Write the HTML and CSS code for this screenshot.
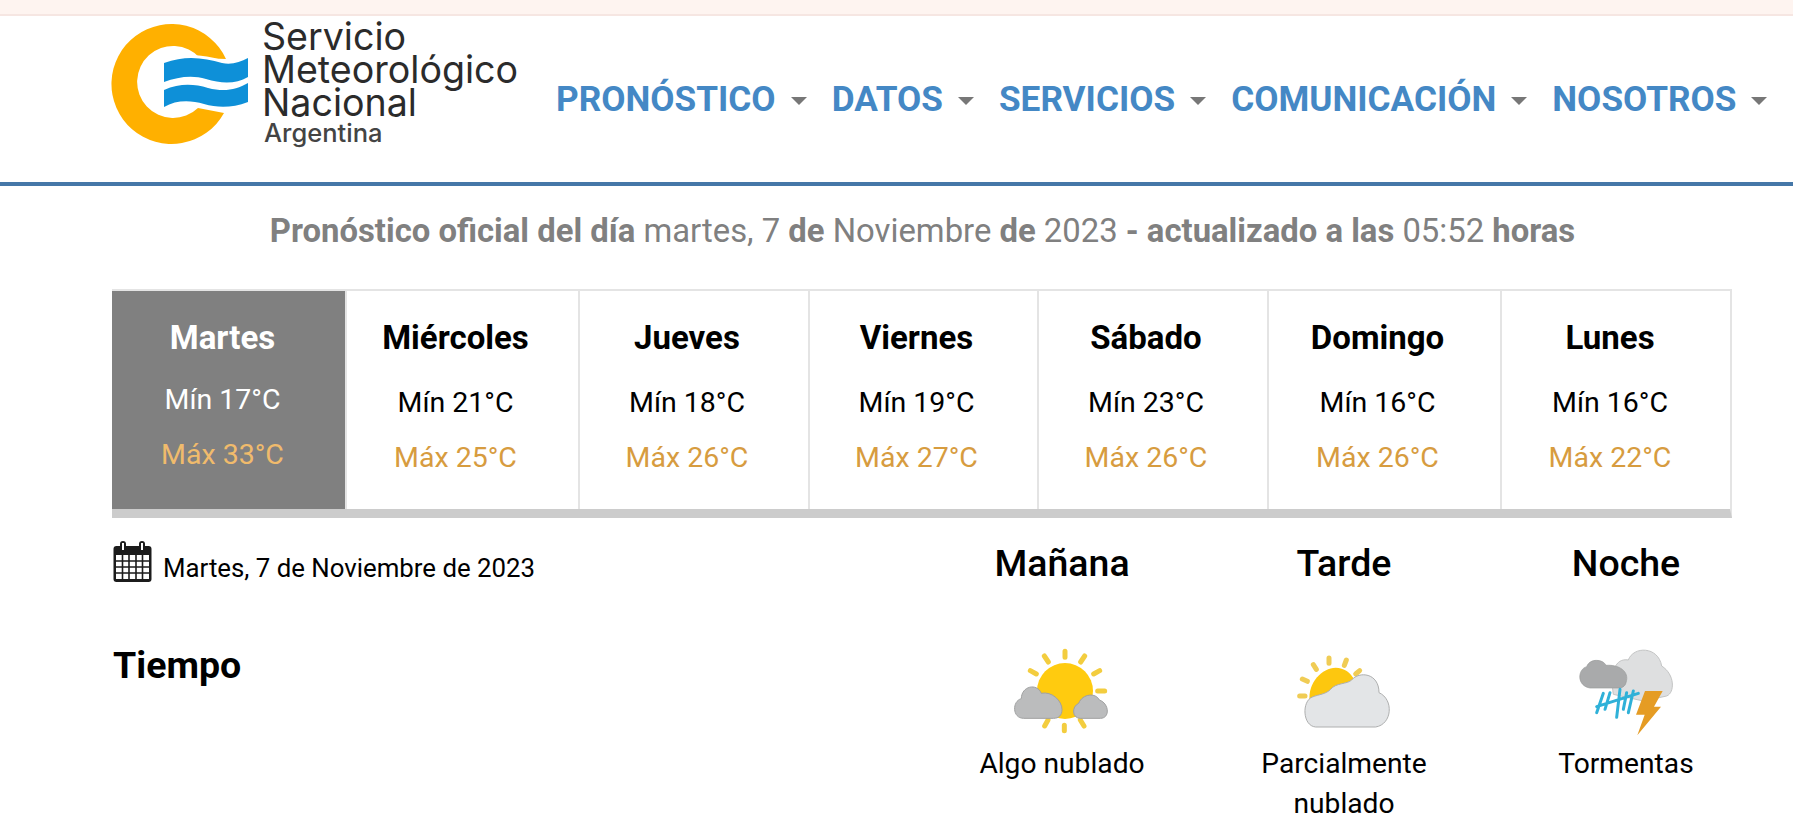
FILE: index.html
```html
<!doctype html>
<html lang="es">
<head>
    <meta charset="UTF-8">
    <meta name="viewport" content="width=device-width, initial-scale=1.0">
    <title>Servicio Meteorológico Nacional</title>
    <link rel="stylesheet" href="styles.css">
</head>
<body>

<div class="top-strip"></div>

<header class="header">
    <a class="logo">
        <svg class="logo-mark" viewBox="110 20 140 130" width="140" height="130">
            <path fill="#ffb000" d="M226 59A60 60 0 1 0 224 113L198 108A36 36 0 1 1 200 58Z"/>
            <path fill="#fff" d="M160 60C186 52 204 55 222 60C232 62 240 59 252 55V106C232 112 218 112 204 108C190 104 176 104 160 111Z"/>
            <path fill="#0e90d8" d="M164 63C186 55 204 58 222 63C232 65 240 62 248 58V77C236 84 222 84 206 79C192 75 178 77 164 82Z"/>
            <path fill="#0e90d8" d="M164 90C180 83 194 84 208 88C224 92 236 90 248 83V102C232 108 218 108 204 104C190 100 176 100 164 107Z"/>
        </svg>
        <div class="logo-text">
            <div class="logo-name">Servicio</div>
            <div class="logo-name">Meteorológico</div>
            <div class="logo-name">Nacional</div>
            <div class="logo-country">Argentina</div>
        </div>
    </a>
    <nav class="nav">
        <a class="nav-item">PRONÓSTICO<span class="caret"></span></a>
        <a class="nav-item">DATOS<span class="caret"></span></a>
        <a class="nav-item">SERVICIOS<span class="caret"></span></a>
        <a class="nav-item">COMUNICACIÓN<span class="caret"></span></a>
        <a class="nav-item">NOSOTROS<span class="caret"></span></a>
    </nav>
</header>

<h1 class="issued"><b>Pronóstico oficial del día</b> martes, 7 <b>de</b> Noviembre <b>de</b> 2023 <b>- actualizado a las</b> 05:52 <b>horas</b></h1>

<div class="days">
    <div class="day active">
        <h3>Martes</h3>
        <div class="min">Mín 17°C</div>
        <div class="max">Máx 33°C</div>
    </div>
    <div class="day">
        <h3>Miércoles</h3>
        <div class="min">Mín 21°C</div>
        <div class="max">Máx 25°C</div>
    </div>
    <div class="day">
        <h3>Jueves</h3>
        <div class="min">Mín 18°C</div>
        <div class="max">Máx 26°C</div>
    </div>
    <div class="day">
        <h3>Viernes</h3>
        <div class="min">Mín 19°C</div>
        <div class="max">Máx 27°C</div>
    </div>
    <div class="day">
        <h3>Sábado</h3>
        <div class="min">Mín 23°C</div>
        <div class="max">Máx 26°C</div>
    </div>
    <div class="day">
        <h3>Domingo</h3>
        <div class="min">Mín 16°C</div>
        <div class="max">Máx 26°C</div>
    </div>
    <div class="day">
        <h3>Lunes</h3>
        <div class="min">Mín 16°C</div>
        <div class="max">Máx 22°C</div>
    </div>
</div>

<div class="detail">
    <div class="detail-row head-row">
        <div class="date">
            <svg class="calendar" viewBox="0 0 39 41" width="39" height="41">
                <rect x="0.5" y="5" width="38" height="36" rx="3" fill="#1c1c1c"/>
                <rect x="7" y="0" width="6" height="11" rx="3" fill="#1c1c1c"/>
                <rect x="26" y="0" width="6" height="11" rx="3" fill="#1c1c1c"/>
                <rect x="9" y="2" width="2" height="7" fill="#fff"/>
                <rect x="28" y="2" width="2" height="7" fill="#fff"/>
                <path fill="#fff" d="M3 14H36V38H3Z"/>
                <path stroke="#1c1c1c" stroke-width="1.6" d="M3 20H36M3 26H36M3 32H36M9.5 14V38M16 14V38M23 14V38M29.5 14V38"/>
            </svg>
            <span>Martes, 7 de Noviembre de 2023</span>
        </div>
        <h2 class="period">Mañana</h2>
        <h2 class="period">Tarde</h2>
        <h2 class="period">Noche</h2>
    </div>
    <div class="detail-row weather-row">
        <h2 class="row-title">Tiempo</h2>
        <div class="forecast">
            <svg class="wicon" viewBox="100 50 300 270" width="100" height="90">
                <g stroke="#f3cd3f" stroke-width="15" stroke-linecap="round">
                    <path d="M259 66V84M197 80L209 98M318 80L306 98M155 124L173 134M363 124L345 134M357 185H378M208 272L198 290M305 272L316 290M257 288V304"/>
                </g>
                <circle cx="259" cy="185" r="84" fill="#ffcb0f"/>
                <path fill="#bbbcbd" stroke="#a0a1a1" stroke-width="3" d="M135 267C100 267 100 215 128 208C128 170 175 160 188 192C220 185 250 215 250 240C250 258 240 267 225 267Z"/>
                <path fill="#bbbcbd" stroke="#a0a1a1" stroke-width="3" d="M305 267C280 267 278 232 300 222C312 192 352 190 362 212C392 222 395 267 365 267Z"/>
            </svg>
            <div class="label">Algo nublado</div>
        </div>
        <div class="forecast">
            <svg class="wicon" viewBox="75 50 300 270" width="100" height="90">
                <g stroke="#f0cc55" stroke-width="15" stroke-linecap="round">
                    <path d="M180 86V102M133 106L142 120M232 92L226 108M100 149L115 156M92 200H108M272 124L260 134"/>
                </g>
                <path fill="#fdc70f" d="M122 215C115 160 160 115 200 115C225 115 245 130 255 150L180 215Z"/>
                <path fill="#e3e5e7" stroke="#aeafaf" stroke-width="3" d="M140 293C100 290 98 215 130 203C150 195 170 195 185 180C200 160 235 165 248 152C270 125 330 130 330 190C375 210 370 285 320 293Z"/>
            </svg>
            <div class="label">Parcialmente nublado</div>
        </div>
        <div class="forecast">
            <svg class="wicon" viewBox="78 50 300 270" width="100" height="90">
                <path fill="#dedfe0" stroke="#c3c4c4" stroke-width="3" d="M190 195C180 130 195 85 235 92C250 50 325 50 335 110C375 135 375 190 350 200L280 215Z"/>
                <path fill="#a9aaab" stroke="#999a9a" stroke-width="2" d="M120 176C80 170 82 120 110 112C120 85 160 90 168 108C205 105 240 125 228 160C225 172 215 176 205 176Z"/>
                <g stroke="#2fb1d8" stroke-width="9" stroke-linecap="round" fill="none">
                    <path d="M160 192L140 250M180 190L165 240M210 180L200 264M230 190L220 240M250 185L235 250M140 232L265 192"/>
                </g>
                <path fill="#e59c24" d="M285 185H338L312 232H333L262 318L284 256H258Z"/>
            </svg>
            <div class="label">Tormentas</div>
        </div>
    </div>
</div>

</body>
</html>
```

FILE: styles.css
```css
* {
    box-sizing: border-box;
}

body {
    margin: 0;
    background: #fff;
    color: #000;
    font-family: Roboto, "Liberation Sans", sans-serif;
    overflow-x: hidden;
}

h1, h2, h3 {
    margin: 0;
}

.top-strip {
    height: 16px;
    background: #fef4f0;
    border-bottom: 2px solid #f6e6e2;
}

.header {
    height: 170px;
    display: flex;
    border-bottom: 4px solid #4577a8;
    padding-left: 110px;
}

.logo {
    display: flex;
    width: 446px;
    padding-top: 4px;
}

.logo-mark {
    flex: none;
}

.logo-text {
    margin-left: 12px;
    color: #2b2b2b;
    font-family: Inter, "Liberation Sans", sans-serif;
}

.logo-name {
    font-size: 37.6px;
    line-height: 33px;
}

.logo-country {
    font-size: 25.5px;
    line-height: 27px;
    font-weight: 500;
    color: #444;
    margin-left: 2px;
}

.nav {
    display: flex;
    padding-top: 61px;
}

.nav-item {
    display: flex;
    align-items: center;
    height: 44px;
    color: #4488c5;
    font-size: 35.2px;
    font-weight: 700;
    margin-right: 25px;
}

.caret {
    width: 0;
    height: 0;
    margin-left: 15px;
    margin-top: 4px;
    border-top: 8px solid #777;
    border-left: 8px solid transparent;
    border-right: 8px solid transparent;
}

.issued {
    text-align: center;
    color: #808080;
    font-size: 32.85px;
    font-weight: 400;
    line-height: 40px;
    padding-top: 25px;
    padding-left: 52px;
    height: 103px;
}

.days {
    display: grid;
    grid-template-columns: 233px 233px 230px 229px 230px 233px 232px;
    width: 1620px;
    margin-left: 112px;
    border-top: 2px solid #e4e4e4;
    border-right: 2px solid #e4e4e4;
    border-bottom: 9px solid #ccc;
    height: 229px;
    text-align: center;
}

.day {
    border-left: 2px solid #e4e4e4;
    padding-top: 27px;
    padding-right: 14px;
}

.day h3 {
    font-size: 33px;
    font-weight: 700;
    line-height: 40px;
}

.min {
    font-size: 28.5px;
    line-height: 36px;
    margin-top: 27px;
}

.max {
    font-size: 28.5px;
    line-height: 36px;
    margin-top: 19px;
    color: #d79c3f;
}

.day.active {
    background: #808080;
    color: #fff;
    border-left-color: #808080;
}

.day.active .min {
    margin-top: 24px;
}

.day.active .max {
    color: #f0bb6c;
}

.detail {
    padding-left: 113px;
}

.detail-row {
    display: grid;
    grid-template-columns: 808px 282px 282px 282px;
    text-align: center;
}

.head-row {
    padding-top: 23px;
    height: 108px;
}

.date {
    display: flex;
    align-items: flex-start;
    font-size: 25.8px;
    line-height: 42px;
    text-align: left;
}

.date span {
    margin-top: 6px;
}

.calendar {
    margin-right: 11px;
    flex: none;
}

.period {
    font-size: 37.5px;
    font-weight: 500;
    line-height: 44px;
}

.row-title {
    text-align: left;
    font-size: 37.5px;
    font-weight: 700;
    line-height: 44px;
    margin-top: 17px;
}

.forecast {
    padding-top: 20px;
}

.wicon {
    display: block;
    margin: 0 auto;
}

.label {
    font-size: 28.2px;
    line-height: 40px;
    margin: 8px auto 0;
    width: 200px;
}
```
